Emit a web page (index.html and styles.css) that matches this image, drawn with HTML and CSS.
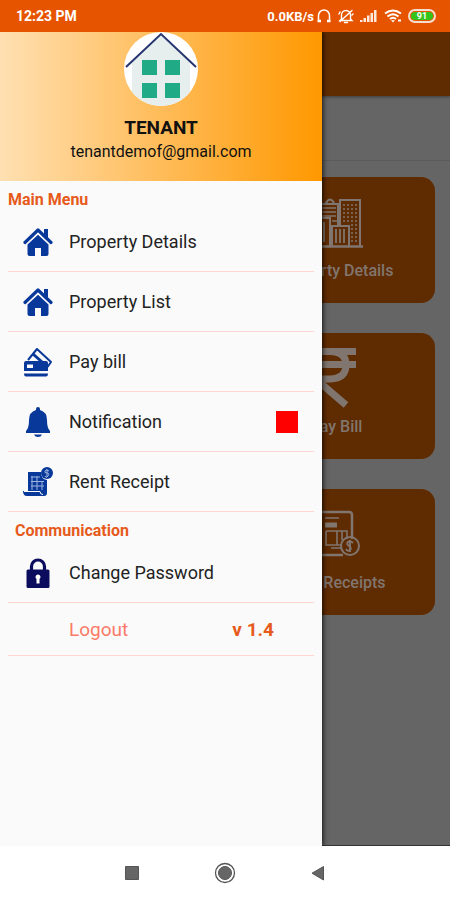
FILE: index.html
```html
<!DOCTYPE html>
<html lang="en">
<head>
<meta charset="utf-8">
<meta name="viewport" content="width=device-width, initial-scale=1">
<title>Tenant</title>
<link rel="stylesheet" href="styles.css">
</head>
<body>
<div class="phone">
  <div class="status">
    <span class="clock">12:23 PM</span>
    <span class="speed">0.0KB/s</span>
    <svg class="status-icon" width="16" height="16" viewBox="0 0 16 16" fill="none" stroke="#fff" stroke-width="1.5"><path d="M2.500 13V7.500a5.500 5.500 0 0 1 11 0V13"/><path d="M1.500 13h3.500M11 13h3.500" stroke-width="2.500"/></svg>
    <svg class="status-icon" width="16" height="16" viewBox="0 0 16 16" fill="none" stroke="#fff" stroke-width="1.400" stroke-linecap="round"><path d="M3.500 11V7a4.500 4.500 0 0 1 9 0v4l1.500 1.500H2zM2 13.500L14 2.500M6.500 14.500h3M1 6l1-2M15 6l-1 1"/></svg>
    <svg class="status-icon" width="18" height="14" viewBox="0 0 18 14" fill="#ffe9dc"><path d="M0 11h2.500v2H0zM3.500 9h2.500v4H3.500zM7 6.500h2.500V13H7zM10.500 4H13v9h-2.500zM14 1h2.500v12H14z"/></svg>
    <svg class="status-icon" width="18" height="14" viewBox="0 0 18 14" fill="none" stroke="#fff" stroke-width="2.100"><path d="M1 4.500Q9-1.500 17 4.500M3.500 7.500Q9 3 14.500 7.500M6 10Q9 7.500 12 10"/><path d="M7 11.300L9 13.500l2-2.200z" fill="#fff" stroke="none"/><path d="M14 11.500h3" stroke-width="2"/></svg>
    <span class="battery"><span class="battery-level">91</span></span>
  </div>

  <div class="stage">
    <main class="home">
      <div class="toolbar"></div>
      <div class="subbar"></div>
      <div class="cards">
        <a class="card" href="#details">
          <svg width="54" height="60" viewBox="0 0 54 60" fill="none" stroke="currentColor" stroke-width="2">
            <path d="M0 54.500h54" stroke-width="2.500"/><path d="M31 34V8h20v46M11 26V12h18v22M17 11q4-7 8 0M2 54V26h19v28M23 54V34h17v20"/>
            <path d="M35 12v20M39 12v20M43 12v40M47 12v40" stroke-width="1.500" stroke-dasharray="2 2"/><path d="M13 16h14M13 20h14M13 24h14M23 29h5" stroke-width="1.500"/><path d="M27 37v14M31 37v14M35 37v14M6 30v20M10 30v20M15 30v20" stroke-width="1.800"/>
          </svg>
          <span>Property Details</span>
        </a>
        <a class="card" href="#pay">
          <svg width="42" height="60" viewBox="0 0 42 60" fill="none" stroke="currentColor" stroke-width="7"><path d="M1 3.500h40M1 16.500h40"/><path d="M1 3.500h14q16 0 16 13.500t-16 14H3v2L31 57" stroke-linejoin="round"/></svg>
          <span>Pay Bill</span>
        </a>
        <a class="card" href="#receipts">
          <svg width="48" height="60" viewBox="0 0 48 60" fill="none" stroke="currentColor" stroke-width="2.500">
            <path d="M40 35V11q0-3-3-3H6q-3 0-3 3v37q0 3 3 3h25"/><path d="M13 14h14M19 44h10" stroke-width="1.600"/><path d="M13 21h12" stroke-width="5"/><path d="M14 27h21v8M14 27v14h15M25 27v14M30 27v9" stroke-width="1.600"/><circle cx="38" cy="42" r="9" stroke-width="2"/><path d="M41 39q-3-3-5-1t1 4t1 4t-4-1M38 36v12" stroke-width="1.900"/>
          </svg>
          <span>Rent Receipts</span>
        </a>
      </div>
    </main>

    <aside class="drawer">
      <header class="profile">
        <svg class="avatar" width="74" height="74" viewBox="0 0 74 74">
          <defs><clipPath id="round"><circle cx="37" cy="37" r="37"/></clipPath></defs>
          <g clip-path="url(#round)"><path fill="#fff" d="M0 0h74v74H0z"/><path fill="#e6eeee" d="M8 74V29L37 2l29 27v45z"/><path fill="#20aa85" d="M18 28h15v15H18zM41 28h15v15H41zM18 51h15v15H18zM41 51h15v15H41z"/><path d="M2 35L37 2l35 33" fill="none" stroke="#26356f" stroke-width="2"/></g>
        </svg>
        <strong class="name">TENANT</strong>
        <span class="email">tenantdemof@gmail.com</span>
      </header>

      <nav class="menu">
        <h2 class="heading">Main Menu</h2>
        <a class="row" href="#details">
          <svg class="icon" viewBox="0 0 30 30"><use href="#house"/></svg>
          <span>Property Details</span>
        </a>
        <a class="row" href="#list">
          <svg class="icon" viewBox="0 0 30 30"><g id="house"><path d="M2 15.500L15 3l13 12.500" fill="none" stroke="#08399a" stroke-width="3.200" stroke-linecap="round" stroke-linejoin="round"/><path fill="#08399a" d="M21 2h4v9l-4-4zM4.500 17.500L15 7.800l10.500 9.700V27q0 2-2 2H18v-8h-6v8H6.500q-2 0-2-2z"/><path d="M3.500 17.200L15 6.400l11.500 10.800" fill="none" stroke="#fafafa" stroke-width="1"/></g></svg>
          <span>Property List</span>
        </a>
        <a class="row" href="#pay">
          <svg class="icon" viewBox="0 0 30 30"><path d="M5 13L14 2l14 13-3.500 5" fill="none" stroke="#08399a" stroke-width="2" stroke-linejoin="round"/><path d="M10 7l9 8" stroke="#08399a" stroke-width="3"/><path fill="#08399a" d="M3 14h20q2 0 2 2v8H1v-8q0-2 2-2zM1 26.500h24q0 3-2 3H3q-2 0-2-3z"/><path fill="#fff" d="M4 17.500h6v3.500H4z"/></svg>
          <span>Pay bill</span>
        </a>
        <a class="row" href="#notification">
          <svg class="icon" viewBox="0 0 30 30" fill="#08399a"><path d="M13 2q0-2 2-2t2 2v1q7 2 7 10 0 8 3 11v2H3v-2q3-3 3-11 0-8 7-10zM11 27.500h8q-1 2.500-4 2.500t-4-2.500z"/></svg>
          <span>Notification</span>
          <span class="badge"></span>
        </a>
        <a class="row" href="#receipt">
          <svg class="icon" viewBox="0 0 30 30"><path fill="#08399a" d="M5 5h13q0 7 6 8v13q0 3-3 3H4q-4 0-4-5h5z"/><path d="M9 9v14M14 9v14M19 14v9M8 10h9M8 14.500h13M8 19h13" stroke="#9fb4de" stroke-width="1"/><path d="M1 24.500h16q0 3 3 3" fill="none" stroke="#fff" stroke-width="1"/><circle cx="24" cy="6" r="6" fill="#08399a"/><path d="M26 4q-3-2-4 0t2 2 1 3-3 0M24 2v8" fill="none" stroke="#9fb4de" stroke-width="1"/></svg>
          <span>Rent Receipt</span>
        </a>
        <h2 class="heading heading-inset">Communication</h2>
        <a class="row" href="#password">
          <svg class="icon" viewBox="0 0 30 30"><path d="M8.500 13V8.500a6.500 6.500 0 0 1 13 0V13" fill="none" stroke="#0c0c5e" stroke-width="3.200"/><path fill="#0c0c5e" d="M5 11.500h20q1.500 0 1.500 1.500v15.500q0 1.500-1.500 1.500H5q-1.500 0-1.500-1.500V13q0-1.500 1.500-1.500z"/><path fill="#fff" d="M15 16.500a2.500 2.500 0 0 1 1.500 4.500v4.500h-3V21a2.500 2.500 0 0 1 1.500-4.500z"/></svg>
          <span>Change Password</span>
        </a>
        <div class="row row-last">
          <a class="logout" href="#logout">Logout</a>
          <span class="version">v 1.4</span>
        </div>
      </nav>
    </aside>
  </div>

  <div class="system-nav">
    <button type="button" aria-label="Recent apps"><svg width="24" height="24" viewBox="0 0 24 24"><path fill="#666" stroke="#555" d="M5.500 5.500h13v13h-13z"/></svg></button>
    <button type="button" aria-label="Home"><svg width="24" height="24" viewBox="0 0 24 24"><circle cx="12" cy="12" r="9.500" fill="none" stroke="#555" stroke-width="1.300"/><circle cx="12" cy="12" r="6.500" fill="#666" stroke="#555"/></svg></button>
    <button type="button" aria-label="Back"><svg width="24" height="24" viewBox="0 0 24 24"><path fill="#666" stroke="#555" d="M17.500 5.500v13.500L6 12.200z"/></svg></button>
  </div>
</div>
</body>
</html>
```
FILE: styles.css
```css
* { box-sizing: border-box; }
body { margin: 0; font-family: Roboto, "Liberation Sans", sans-serif; font-size: 18px; color: #222; }
a { color: inherit; text-decoration: none; }

.phone { display: flex; flex-direction: column; min-height: 100vh; }

.status {
  position: relative; z-index: 1;
  display: flex; align-items: center; gap: 6px;
  height: 32px; padding: 0 14px 0 16px;
  background: #e65400; color: #fff;
}
.clock { flex: 1; font-size: 14px; font-weight: 700; }
.speed { font-size: 13px; font-weight: 700; margin-right: -4px; }
.status-icon { flex: none; }
.battery { display: flex; width: 28px; height: 14px; padding: 1px; border: 2px solid #f7dfd0; border-radius: 7px; }
.battery-level {
  flex: 1; border-radius: 4px; background: #35c41c;
  font-size: 9px; line-height: 8px; font-weight: 700; text-align: center;
}

.stage { position: relative; flex: 1; display: flex; flex-direction: column; }
.home { flex: 1; background: #656565; border-bottom: 1px solid #333; }
.toolbar { height: 64px; background: #5f2b00; box-shadow: 0 1px 3px rgba(0, 0, 0, .4); }
.subbar { height: 65px; border-bottom: 1px solid #5b5b5b; }
.cards { display: grid; grid-template-columns: 1fr 1fr; gap: 30px 24px; padding: 16px 15px; }
.card {
  grid-column: 2; display: flex; flex-direction: column; align-items: center; gap: 7px;
  height: 126px; padding-top: 15px; border-radius: 14px;
  background: #5f2b00; color: #81766f;
  font-size: 16px; line-height: 24px; font-weight: 500;
}

.drawer {
  position: absolute; top: 0; bottom: 0; left: 0; width: 322px; max-width: 85%;
  background: #fafafa; box-shadow: 1px 0 5px rgba(0, 0, 0, .8);
}
.profile {
  display: flex; flex-direction: column; align-items: center;
  height: 149px; background: linear-gradient(90deg, #ffe0b2, #ff9800); color: #111;
}
.name { margin-top: 10px; font-size: 19px; line-height: 24px; }
.email { font-size: 16px; line-height: 24px; }

.menu { padding: 0 8px; }
.heading { margin: 0; padding: 9px 0 2px; font-size: 16px; line-height: 20px; font-weight: 700; color: #e65a1c; }
.heading-inset { padding-left: 7px; }
.row {
  display: flex; align-items: center; gap: 16px;
  height: 60px; padding: 0 16px 0 15px; border-bottom: 1px solid #ffd6d0;
}
.icon { flex: none; width: 30px; height: 30px; }
.badge { width: 22px; height: 22px; margin-left: auto; background: #f00; }
.row-last { justify-content: space-between; height: 53px; padding: 0 40px 0 61px; font-size: 19px; }
.logout { color: #fa7a68; }
.version { color: #e65a1c; font-weight: 700; }

.system-nav {
  position: relative; z-index: 1;
  display: flex; justify-content: center; align-items: center; gap: 69px;
  height: 54px; background: #fff;
}
.system-nav button { display: flex; padding: 0; border: 0; background: none; }
```
